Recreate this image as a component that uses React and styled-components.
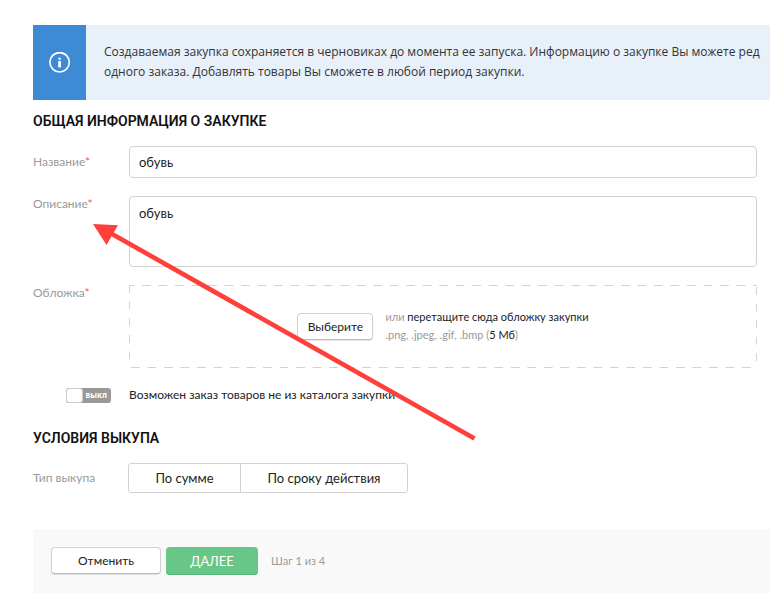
import React from "react";
import styled, { createGlobalStyle } from "styled-components";

const GlobalStyle = createGlobalStyle`
  *, *::before, *::after { box-sizing: border-box; }
  body {
    margin: 0;
    background: #fff;
    color: #222;
    font-family: Lato, "Noto Sans", sans-serif;
    font-size: 12px;
    line-height: 20px;
    overflow-x: hidden;
  }
  button, input, textarea { font: inherit; color: inherit; }
`;

const Page = styled.main`
  position: relative;
  padding: 25px 0 16px 33px;
`;

const Notice = styled.section`
  display: flex;
  height: 75px;
  background: #e8f0fa;
  overflow: hidden;
`;

const NoticeIcon = styled.div`
  display: flex;
  flex: none;
  align-items: center;
  justify-content: center;
  width: 53px;
  background: #3d8bd5;
`;

const NoticeText = styled.p`
  margin: 0;
  padding: 17px 0 0 18px;
  font-family: "Open Sans", "Noto Sans", sans-serif;
  font-size: 12px;
  white-space: nowrap;
  color: #333;
`;

const Heading = styled.h2`
  margin: ${(p) => p.$top}px 0 0;
  font-family: Roboto, "Noto Sans", sans-serif;
  font-size: 14px;
  font-weight: 600;
  line-height: 20px;
  color: #111;
`;

const Row = styled.div`
  display: grid;
  grid-template-columns: 96px minmax(0, 1fr);
  align-items: ${(p) => p.$align || "start"};
  margin: ${(p) => p.$top}px 13px 0 0;
`;

const Label = styled.label`
  color: #999;
  font-size: 12px;
  line-height: 16px;
`;

const Star = styled.span`
  color: #ee6055;
`;

const TextInput = styled.input`
  width: 100%;
  height: 32px;
  padding: 0 9px;
  border: 1px solid #d2d2d2;
  border-radius: 4px;
  background: #fff;
  font-size: 13px;
`;

const TextArea = styled.textarea`
  display: block;
  width: 100%;
  height: 71px;
  padding: 7px 9px;
  border: 1px solid #d2d2d2;
  border-radius: 4px;
  background: #fff;
  font-size: 13px;
  line-height: 18px;
  resize: none;
`;

const dash = (dir) => `linear-gradient(${dir}, #d2d2d2 50%, transparent 50%)`;

const DropZone = styled.div`
  display: flex;
  align-items: center;
  justify-content: center;
  gap: 12px;
  height: 83px;
  background-image: ${dash("90deg")}, ${dash("90deg")}, ${dash("180deg")}, ${dash("180deg")};
  background-repeat: repeat-x, repeat-x, repeat-y, repeat-y;
  background-size: calc(100% / 38) 1px, calc(100% / 38) 1px, 1px 20%, 1px 20%;
  background-position: 13px 0, 2px 100%, 0 0, 100% 2px;
`;

const LightButton = styled.button`
  height: 27px;
  width: ${(p) => p.$width}px;
  padding: 0;
  border: 1px solid #d2d2d2;
  border-bottom-color: #bbb;
  border-radius: 4px;
  background: #fff;
  box-shadow: 0 1px 1px rgba(0, 0, 0, 0.1);
  font-size: 12px;
`;

const NextButton = styled.button`
  width: 92px;
  height: 28px;
  padding: 0;
  border: 0;
  border-radius: 4px;
  background: #68c688;
  box-shadow: inset 0 -1px 0 #54b676;
  color: #fff;
  font-size: 13px;
`;

const DropHint = styled.p`
  margin: 0;
  padding-bottom: 2px;
  font-size: 11px;
  line-height: 18px;
  color: #999;
`;

const Dark = styled.span`
  color: #222;
`;

const SwitchRow = styled.label`
  display: flex;
  align-items: center;
  gap: 18px;
  margin: 18px 0 0 33px;
  line-height: 18px;
`;

const Switch = styled.input`
  appearance: none;
  display: flex;
  align-items: center;
  justify-content: space-between;
  width: 45px;
  height: 15px;
  margin: 0;
  padding-right: 4px;
  border-radius: 3px;
  background: #999;

  &::before {
    content: "";
    width: 17px;
    height: 15px;
    border: 1px solid #ccc;
    border-radius: 3px;
    background: #fff;
  }

  &::after {
    content: "выкл";
    color: #fff;
    font-family: "Noto Sans", sans-serif;
    font-size: 8px;
    font-weight: 700;
    line-height: 12px;
  }
`;

const Segments = styled.div`
  display: flex;
  justify-self: start;
  height: 30px;
  margin-left: -1px;
  border: 1px solid #d2d2d2;
  border-radius: 3px;
`;

const Segment = styled.button`
  width: ${(p) => p.$width}px;
  padding: 0;
  border: 0;
  background: transparent;
  font-size: 13px;

  & + & {
    border-left: 1px solid #d2d2d2;
  }
`;

const Footer = styled.footer`
  display: flex;
  align-items: center;
  height: 64px;
  margin-top: 36px;
  padding-left: 18px;
  background: #f9f9f9;
`;

const Actions = styled.div`
  display: flex;
  gap: 5px;
`;

const Step = styled.span`
  margin-left: 13px;
  color: #999;
  font-size: 11px;
`;

const Arrow = styled.svg`
  position: absolute;
  left: 92px;
  top: 222px;
  pointer-events: none;
`;

export default function App() {
  return (
    <>
      <GlobalStyle />
      <Page>
        <Notice>
          <NoticeIcon>
            <svg width="22" height="22" viewBox="0 0 22 22" fill="none" aria-hidden="true">
              <circle cx="10.6" cy="10.3" r="9.7" stroke="#fff" strokeWidth="1.7" />
              <circle cx="10.6" cy="6.7" r="1.2" fill="#fff" />
              <rect x="9.2" y="9" width="2.8" height="6.6" rx="0.8" fill="#fff" />
            </svg>
          </NoticeIcon>
          <NoticeText>
            Создаваемая закупка сохраняется в черновиках до момента ее запуска. Информацию о закупке Вы можете ред
            <br />
            одного заказа. Добавлять товары Вы сможете в любой период закупки.
          </NoticeText>
        </Notice>

        <Heading $top={11}>ОБЩАЯ ИНФОРМАЦИЯ О ЗАКУПКЕ</Heading>

        <Row $top={15} $align="center">
          <Label htmlFor="name">Название<Star>*</Star></Label>
          <TextInput id="name" defaultValue="обувь" />
        </Row>
        <Row $top={18}>
          <Label htmlFor="description">Описание<Star>*</Star></Label>
          <TextArea id="description" defaultValue="обувь" />
        </Row>
        <Row $top={18}>
          <Label htmlFor="cover">Обложка<Star>*</Star></Label>
          <DropZone>
            <LightButton id="cover" type="button" $width={76}>Выберите</LightButton>
            <DropHint>
              или <Dark>перетащите сюда обложку закупки</Dark>
              <br />
              .png, .jpeg, .gif, .bmp (<Dark>5 Мб</Dark>)
            </DropHint>
          </DropZone>
        </Row>

        <SwitchRow>
          <Switch type="checkbox" role="switch" />
          <span>Возможен заказ товаров не из каталога закупки</span>
        </SwitchRow>

        <Heading $top={24}>УСЛОВИЯ ВЫКУПА</Heading>

        <Row $top={15} $align="center">
          <Label as="span" id="type">Тип выкупа</Label>
          <Segments role="group" aria-labelledby="type">
            <Segment type="button" $width={111}>По сумме</Segment>
            <Segment type="button" $width={167}>По сроку действия</Segment>
          </Segments>
        </Row>

        <Footer>
          <Actions>
            <LightButton type="button" $width={110}>Отменить</LightButton>
            <NextButton type="button">ДАЛЕЕ</NextButton>
          </Actions>
          <Step>Шаг 1 из 4</Step>
        </Footer>

        <Arrow width="386" height="220" viewBox="0 0 386 220" aria-hidden="true">
          <path d="M20 12 L382.5 216.5" stroke="#ff3f3a" strokeWidth="4.6" />
          <path d="M1 2 L26 3.2 L14.5 23 Z" fill="#ff3f3a" />
        </Arrow>
      </Page>
    </>
  );
}
